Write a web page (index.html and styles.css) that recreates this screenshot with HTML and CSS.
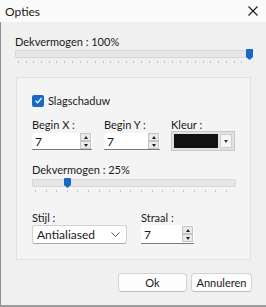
FILE: index.html
```html
<!DOCTYPE html>
<html lang="nl">
<head>
    <meta charset="UTF-8">
    <title>Opties</title>
    <link rel="stylesheet" href="styles.css">
</head>
<body>
    <div class="window">
        <div class="titlebar">
            <span class="title">Opties</span>
            <svg class="close" width="10" height="10" viewBox="0 0 10 10">
                <path d="M0.5 0.5 L9.5 9.5 M9.5 0.5 L0.5 9.5" stroke="#1a1a1a" stroke-width="1.1" fill="none"/>
            </svg>
        </div>
        <div class="content">
            <div class="lbl top-lbl">Dekvermogen : 100%</div>
            <div class="slider">
                <div class="track"></div>
                <svg class="thumb" style="left: 231px;" width="7" height="11" viewBox="0 0 7 11">
                    <path d="M1 0 H6 Q7 0 7 1 V8 L3.5 11 L0 8 V1 Q0 0 1 0 Z" fill="#1769c4"/>
                </svg>
                <div class="ticks ticks-fine"></div>
            </div>

            <div class="group">
                <div class="check">
                    <span class="box">
                        <svg width="9" height="9" viewBox="0 0 9 9">
                            <path d="M1.5 4.8 L3.6 6.8 L7.6 2" stroke="#fff" stroke-width="1.2" fill="none"/>
                        </svg>
                    </span>
                    <span>Slagschaduw</span>
                </div>

                <div class="row row-pos">
                    <div class="col col-x">
                        <div class="lbl">Begin X :</div>
                        <div class="spin">
                            <span class="val">7</span>
                            <span class="arrows"><span class="arr up"></span><span class="arr down"></span></span>
                        </div>
                    </div>
                    <div class="col col-y">
                        <div class="lbl">Begin Y :</div>
                        <div class="spin">
                            <span class="val">7</span>
                            <span class="arrows"><span class="arr up"></span><span class="arr down"></span></span>
                        </div>
                    </div>
                    <div class="col col-color">
                        <div class="lbl">Kleur :</div>
                        <div class="colorpick">
                            <span class="swatch"></span>
                            <span class="drop"><span class="tri"></span></span>
                        </div>
                    </div>
                </div>

                <div class="lbl inner-lbl">Dekvermogen : 25%</div>
                <div class="slider inner-slider">
                    <div class="track"></div>
                    <svg class="thumb" style="left: 32px;" width="7" height="10" viewBox="0 0 7 10">
                        <path d="M1 0 H6 Q7 0 7 1 V7 L3.5 10 L0 7 V1 Q0 0 1 0 Z" fill="#1769c4"/>
                    </svg>
                    <div class="ticks ticks-wide"></div>
                </div>

                <div class="row row-style">
                    <div class="col col-style">
                        <div class="lbl">Stijl :</div>
                        <div class="select">
                            <span>Antialiased</span>
                            <svg width="9" height="5" viewBox="0 0 9 5">
                                <path d="M0.5 0.5 L4.5 4.5 L8.5 0.5" stroke="#555" stroke-width="1" fill="none"/>
                            </svg>
                        </div>
                    </div>
                    <div class="col col-radius">
                        <div class="lbl">Straal :</div>
                        <div class="spin">
                            <span class="val">7</span>
                            <span class="arrows"><span class="arr up"></span><span class="arr down"></span></span>
                        </div>
                    </div>
                </div>
            </div>

            <div class="buttons">
                <button class="btn btn-ok">Ok</button>
                <button class="btn btn-cancel">Annuleren</button>
            </div>
        </div>
    </div>
</body>
</html>
```

FILE: styles.css
```css
body {
    margin: 0;
    font-family: "Lato", "Noto Sans", sans-serif;
    font-size: 11px;
    color: #1a1a1a;
    background: #f0f0f0;
}
.window {
    width: 266px;
    height: 307px;
    box-sizing: border-box;
    background: #f0f0f0;
    border-bottom: 2px solid #9a9a9a;
    overflow: hidden;
}
.titlebar {
    height: 22px;
    background: #fafafa;
    display: flex;
    align-items: center;
    justify-content: space-between;
    padding: 0 8px 0 5px;
}
.title {
    font-size: 12px;
}
.content {
    height: 283px;
    border-left: 1px solid #8c8c8c;
    padding: 0 14px 0 14px;
}
.lbl {
    line-height: 14px;
    height: 14px;
    white-space: nowrap;
}
.top-lbl {
    padding-top: 13px;
}
.slider {
    position: relative;
    height: 16px;
}
.track {
    position: absolute;
    left: 0;
    right: 0;
    top: 1px;
    height: 6px;
    background: #e6e6e6;
    border: 1px solid #d8d8d8;
    border-radius: 1px;
}
.thumb {
    position: absolute;
    top: 0;
}
.ticks {
    position: absolute;
    left: 3px;
    right: 3px;
    top: 12px;
    height: 2px;
}
.ticks-fine {
    background: repeating-linear-gradient(90deg, #c2c2c2 0 1px, transparent 1px 7.7px);
}
.ticks-wide {
    background: repeating-linear-gradient(90deg, #c2c2c2 0 1px, transparent 1px 10.6px);
}
.group {
    margin: 12px 1px 0 1px;
    height: 183px;
    box-sizing: border-box;
    background: #f4f4f4;
    border: 1px solid #e2e2e2;
    padding: 16px 14px 0 15px;
}
.check {
    display: flex;
    align-items: center;
    gap: 4px;
    height: 13px;
}
.box {
    width: 12px;
    height: 12px;
    background: #1769c4;
    border-radius: 2px;
    display: flex;
    align-items: center;
    justify-content: center;
}
.row {
    display: flex;
}
.row-pos {
    margin-top: 11px;
}
.col-x {
    width: 60px;
    margin-right: 12px;
}
.col-y {
    width: 56px;
    margin-right: 11px;
}
.col-color {
    width: 64px;
}
.spin {
    margin-top: 1px;
    height: 17px;
    box-sizing: border-box;
    background: #fff;
    border-bottom: 1px solid #7a7a7a;
    display: flex;
    align-items: center;
    justify-content: space-between;
    padding: 0 1px 0 3px;
    font-size: 12px;
}
.arrows {
    display: flex;
    flex-direction: column;
}
.arr {
    width: 11px;
    height: 8px;
    box-sizing: border-box;
    background: #eaeaea;
    border: 1px solid #c4c4c4;
    display: flex;
    align-items: center;
    justify-content: center;
}
.arr::after {
    content: "";
    border-left: 2px solid transparent;
    border-right: 2px solid transparent;
}
.up::after {
    border-bottom: 3px solid #222;
}
.down::after {
    border-top: 3px solid #222;
}
.colorpick {
    margin-top: -1px;
    height: 20px;
    box-sizing: border-box;
    background: #e1e1e1;
    border: 1px solid #c8c8c8;
    display: flex;
    align-items: center;
    padding: 2px;
    gap: 2px;
}
.swatch {
    flex: 1;
    height: 14px;
    background: #111;
}
.drop {
    width: 12px;
    height: 14px;
    background: #f5f5f5;
    border: 1px solid #cfcfcf;
    box-sizing: border-box;
    display: flex;
    align-items: center;
    justify-content: center;
}
.tri {
    border-left: 2px solid transparent;
    border-right: 2px solid transparent;
    border-top: 3px solid #333;
}
.inner-lbl {
    margin-top: 12px;
}
.inner-slider {
    margin-top: 1px;
}
.row-style {
    margin-top: 17px;
}
.col-style {
    width: 95px;
    margin-right: 14px;
}
.col-radius {
    width: 53px;
}
.select {
    height: 19px;
    box-sizing: border-box;
    background: #fff;
    border: 1px solid #d0d0d0;
    border-bottom-color: #a8a8a8;
    border-radius: 3px;
    display: flex;
    align-items: center;
    justify-content: space-between;
    padding: 0 6px 0 4px;
    font-size: 12px;
}
.col-radius .spin {
    margin-top: 0;
    height: 19px;
}
.buttons {
    display: flex;
    justify-content: flex-end;
    gap: 4px;
    margin-top: 13px;
}
.btn {
    height: 19px;
    font-family: inherit;
    font-size: 11px;
    color: #1a1a1a;
    background: #fdfdfd;
    border: 1px solid #d3d3d3;
    border-bottom-color: #bcbcbc;
    border-radius: 4px;
    padding: 0;
}
.btn-ok {
    width: 69px;
}
.btn-cancel {
    width: 61px;
}
```
